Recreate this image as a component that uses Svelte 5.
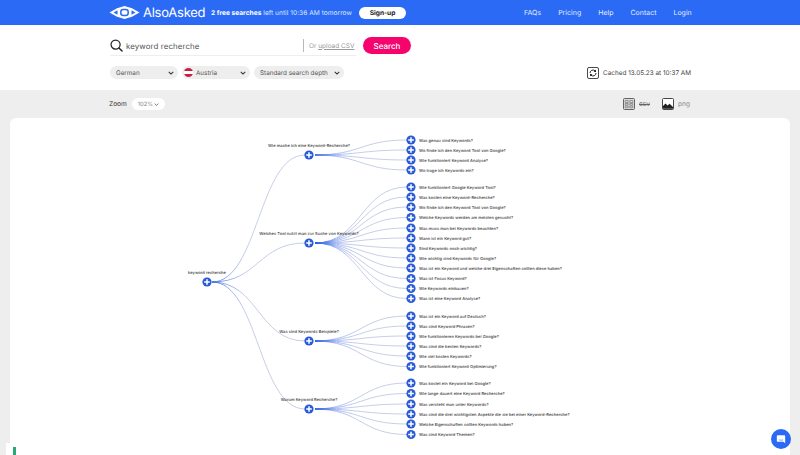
<script>
  const root = { x: 207, y: 282, label: 'keyword recherche' };
  const groups = [
    { y: 155, label: 'Wie mache ich eine Keyword-Recherche?', items: [
      [140, 'Was genau sind Keywords?'],
      [150, 'Wo finde ich den Keyword Tool von Google?'],
      [160, 'Wie funktioniert Keyword Analyse?'],
      [170, 'Wo trage ich Keywords ein?']
    ]},
    { y: 243, label: 'Welches Tool nutzt man zur Suche von Keywords?', items: [
      [187, 'Wie funktioniert Google Keyword Tool?'],
      [197, 'Was kosten eine Keyword-Recherche?'],
      [207, 'Wo finde ich den Keyword Tool von Google?'],
      [217.5, 'Welche Keywords werden am meisten gesucht?'],
      [228, 'Was muss man bei Keywords beachten?'],
      [238, 'Wann ist ein Keyword gut?'],
      [248, 'Sind Keywords noch wichtig?'],
      [258, 'Wie wichtig sind Keywords für Google?'],
      [268, 'Was ist ein Keyword und welche drei Eigenschaften sollten diese haben?'],
      [278.5, 'Was ist Focus Keyword?'],
      [288.5, 'Wie Keywords einbauen?'],
      [298.5, 'Was ist eine Keyword Analyse?']
    ]},
    { y: 341, label: 'Was sind Keywords Beispiele?', items: [
      [316, 'Was ist ein Keyword auf Deutsch?'],
      [326, 'Was sind Keyword Phrasen?'],
      [336, 'Wie funktionieren Keywords bei Google?'],
      [346, 'Was sind die besten Keywords?'],
      [356, 'Wie viel kosten Keywords?'],
      [366.5, 'Wie funktioniert Keyword Optimierung?']
    ]},
    { y: 409, label: 'Warum Keyword Recherche?', items: [
      [383, 'Was kostet ein Keyword bei Google?'],
      [393.5, 'Wie lange dauert eine Keyword Recherche?'],
      [404, 'Was versteht man unter Keywords?'],
      [414, 'Was sind die drei wichtigsten Aspekte die sie bei einer Keyword-Recherche?'],
      [424, 'Welche Eigenschaften sollten Keywords haben?'],
      [434.5, 'Was sind Keyword Themen?']
    ]}
  ];
  const midX = 309;
  const leafX = 411;
  const link = (x0, y0, x1, y1) => {
    const m = (x0 + x1) / 2;
    return `M${x0} ${y0}C${m} ${y0} ${m} ${y1} ${x1} ${y1}`;
  };
  const nav = ['FAQs', 'Pricing', 'Help', 'Contact', 'Login'];
  const chips = [
    { label: 'German', cls: 'lang' },
    { label: 'Austria', cls: 'country', flag: true },
    { label: 'Standard search depth', cls: 'depth' }
  ];
</script>

<div class="page">
  <header class="topbar">
    <div class="brand">
      <svg class="logo" viewBox="0 0 31 13" aria-hidden="true">
        <path d="M.5 6.5 8 2.2 15.5 0 23 2.2 30.5 6.5 23 10.8 15.5 13 8 10.8Z" fill="#fff" />
        <path d="M4.5 6.5 8.5 4.2V8.8Z M26.5 6.5 22.5 4.2V8.8Z" fill="#2a6af5" />
        <rect x="11.8" y="3.6" width="7.4" height="5.8" rx="2.4" fill="none" stroke="#2a6af5" stroke-width="1.5" />
      </svg>
      <span class="wordmark">AlsoAsked</span>
    </div>
    <p class="quota"><b>2 free searches</b> left until 10:36 AM tomorrow</p>
    <span class="signup">Sign-up</span>
    <nav class="nav">
      {#each nav as item}<span>{item}</span>{/each}
    </nav>
  </header>

  <section class="searchpanel">
    <div class="searchrow">
      <svg class="glass" viewBox="0 0 14 14" aria-hidden="true">
        <circle cx="6" cy="6" r="4.9" fill="none" stroke="#222" stroke-width="1.3" />
        <path d="M9.6 9.6 13 13" stroke="#222" stroke-width="1.5" stroke-linecap="round" />
      </svg>
      <span class="query">keyword recherche</span>
      <span class="divider"></span>
      <span class="upload">Or <u>upload CSV</u></span>
      <span class="searchbtn">Search</span>
    </div>
    <div class="filterrow">
      <div class="chips">
        {#each chips as chip}
          <div class="chip {chip.cls}">
            {#if chip.flag}
              <span class="flag"></span>
            {/if}
            <span class="chiplabel">{chip.label}</span>
            <svg class="chev" viewBox="0 0 8 5" aria-hidden="true"><path d="M1 1 4 4 7 1" fill="none" stroke="#333" stroke-width="1.4" /></svg>
          </div>
        {/each}
      </div>
      <div class="cached">
        <svg class="refresh" viewBox="0 0 12 12" aria-hidden="true">
          <rect x=".5" y=".5" width="11" height="11" rx="1.5" fill="#fff" stroke="#333" stroke-width=".9" />
          <path d="M3 6a3 3 0 0 1 5-2.2M9 6a3 3 0 0 1-5 2.2" fill="none" stroke="#222" stroke-width="1" />
          <path d="M9 2.4V5H6.6ZM3 9.6V7H5.4Z" fill="#222" />
        </svg>
        <span>Cached 13.05.23 at 10:37 AM</span>
      </div>
    </div>
  </section>

  <main class="workspace">
    <div class="toolbar">
      <div class="zoom">
        <span class="zoomlabel">Zoom</span>
        <span class="zoompill">102%
          <svg class="chev small" viewBox="0 0 8 5" aria-hidden="true"><path d="M1 1 4 4 7 1" fill="none" stroke="#444" stroke-width="1.2" /></svg>
        </span>
      </div>
      <div class="exports">
        <svg class="exporticon" viewBox="0 0 12 12" aria-hidden="true">
          <rect x=".5" y=".5" width="11" height="11" rx="1" fill="#ddd" stroke="#555" stroke-width=".9" />
          <path d="M2.2 2.5h3v2h-3ZM6.8 2.5h3v2h-3ZM2.2 5.5h3v1.6h-3ZM6.8 5.5h3v1.6h-3ZM2.2 8h3v1.8h-3ZM6.8 8h3v1.8h-3Z" fill="none" stroke="#666" stroke-width=".6" />
        </svg>
        <span class="csv">csv</span>
        <svg class="exporticon png" viewBox="0 0 12 12" aria-hidden="true">
          <rect x=".5" y=".5" width="11" height="11" rx="1" fill="#fff" stroke="#333" stroke-width=".9" />
          <path d="M1 10.8V8l2.5-2.6L5.6 7.6 7.6 5.8 11 9v1.8Z" fill="#222" />
        </svg>
        <span class="pngtext">png</span>
      </div>
    </div>

    <div class="canvas">
      <svg class="tree" viewBox="0 0 780 337" aria-label="Question tree">
        <defs>
          <linearGradient id="fadeRoot" gradientUnits="userSpaceOnUse" x1="213" y1="0" x2="245" y2="0">
            <stop offset="0" stop-color="#2a5fe0" />
            <stop offset="1" stop-color="#aeb9dc" />
          </linearGradient>
          <linearGradient id="fadeMid" gradientUnits="userSpaceOnUse" x1="316" y1="0" x2="356" y2="0">
            <stop offset="0" stop-color="#2a5fe0" />
            <stop offset=".5" stop-color="#85a0f0" />
            <stop offset="1" stop-color="#aeb9dc" />
          </linearGradient>
        </defs>
        <g transform="translate(-10 -118)">
          {#each groups as g}
            <path class="link" stroke="url(#fadeRoot)" d={link(root.x + 5, root.y, midX - 4, g.y)} />
            {#each g.items as it}
              <path class="link" stroke="url(#fadeMid)" d={link(midX + 6, g.y, leafX - 4, it[0])} />
            {/each}
          {/each}

          <text class="label" x={root.x} y={root.y - 8.5} text-anchor="middle">{root.label}</text>
          <g transform="translate({root.x} {root.y})">
            <circle class="node" r="4.6" /><path class="plus" d="M-2.8 0H2.8M0-2.8V2.8" />
          </g>

          {#each groups as g}
            <text class="label" x={midX} y={g.y - 8.5} text-anchor="middle">{g.label}</text>
            <g transform="translate({midX} {g.y})">
              <circle class="node" r="4.6" /><path class="plus" d="M-2.8 0H2.8M0-2.8V2.8" />
            </g>
            {#each g.items as it}
              <g transform="translate({leafX} {it[0]})">
                <circle class="node" r="4.6" /><path class="plus" d="M-2.8 0H2.8M0-2.8V2.8" />
              </g>
              <text class="label" x={leafX + 8} y={it[0] + 1.5}>{it[1]}</text>
            {/each}
          {/each}
        </g>
      </svg>
      <span class="badge"><i></i></span>
    </div>
  </main>

  <button class="chat" aria-label="Chat">
    <svg viewBox="0 0 12 12" aria-hidden="true">
      <path d="M2 1.5h8a1 1 0 0 1 1 1v8.5L8.8 9.4H2a1 1 0 0 1-1-1v-6a1 1 0 0 1 1-.9Z" fill="#fff" />
      <path d="M3.4 6.8c1.5.9 3.7.9 5.2 0" fill="none" stroke="#2a6af5" stroke-width=".7" />
    </svg>
  </button>
</div>

<style>
  :global(body) { margin: 0; overflow: hidden; background: #eee; }
  .page {
    position: relative;
    width: 800px;
    height: 455px;
    overflow: hidden;
    display: flex;
    flex-direction: column;
    font-family: Inter, "Open Sans", "Liberation Sans", sans-serif;
    text-rendering: geometricPrecision;
    color: #444;
  }
  p { margin: 0; }

  .topbar {
    height: 25px;
    flex: none;
    background: #2a6af5;
    color: #fff;
    display: flex;
    align-items: center;
    padding-left: 109px;
    box-sizing: border-box;
  }
  .brand { display: flex; align-items: center; gap: 3px; width: 102px; }
  .logo { width: 31px; height: 13px; flex: none; }
  .wordmark { font-size: 13px; font-weight: 400; letter-spacing: -.25px; }
  .quota { font-size: 6.6px; width: 148px; color: #dfe8ff; white-space: nowrap; letter-spacing: .03px; }
  .quota b { font-weight: 700; color: #fff; }
  .signup {
    width: 47px;
    height: 12px;
    border-radius: 6px;
    background: #fff;
    color: #222;
    font-size: 6.6px;
    font-weight: 700;
    display: flex;
    align-items: center;
    justify-content: center;
  }
  .nav { display: flex; gap: 17px; margin-left: 118px; font-size: 7px; color: #e3ebff; }

  .searchpanel {
    height: 65px;
    flex: none;
    background: #fff;
    box-sizing: border-box;
    padding: 11px 109px 0 110px;
    display: flex;
    flex-direction: column;
  }
  .searchrow {
    height: 19px;
    width: 301px;
    display: flex;
    align-items: center;
    position: relative;
  }
  .searchrow::after {
    content: "";
    position: absolute;
    left: 0;
    top: 19px;
    width: 246px;
    height: 1px;
    background: #eee;
  }
  .glass { width: 13px; height: 13px; flex: none; }
  .query { font-size: 7.9px; color: #555; margin-left: 3px; width: 177px; letter-spacing: .1px; white-space: nowrap; flex: none; }
  .divider { width: 1px; height: 13px; background: #b8b8b8; flex: none; }
  .upload { font-size: 6.5px; color: #999; margin-left: 5px; width: 54px; white-space: nowrap; flex: none; }
  .searchbtn {
    width: 48px;
    height: 17px;
    flex: none;
    border-radius: 9px;
    background: #f5046e;
    color: #fff;
    font-size: 8px;
    font-weight: 500;
    display: flex;
    align-items: center;
    justify-content: center;
  }
  .filterrow {
    display: flex;
    justify-content: space-between;
    align-items: center;
    margin-top: 11px;
    height: 13px;
  }
  .chips { display: flex; gap: 4px; }
  .chip {
    height: 13px;
    box-sizing: border-box;
    background: #eee;
    border-radius: 6.5px;
    display: flex;
    align-items: center;
    font-size: 6.3px;
    color: #555;
    padding: 0 4px 0 6px;
  }
  .chiplabel { flex: 1; white-space: nowrap; }
  .lang { width: 68px; }
  .country { width: 68px; padding-left: 2px; }
  .depth { width: 90px; padding-left: 6px; }
  .flag {
    width: 9px;
    height: 9px;
    border-radius: 50%;
    margin-right: 3px;
    flex: none;
    background: linear-gradient(#c8213f 33%, #fff 33%, #fff 66%, #c8213f 66%);
  }
  .chev { width: 6px; height: 4px; flex: none; }
  .chev.small { width: 5px; height: 3px; margin-left: 1px; }
  .cached { display: flex; align-items: center; gap: 4px; font-size: 6.4px; color: #444; white-space: nowrap; }
  .refresh { width: 12px; height: 12px; flex: none; }

  .workspace { flex: 1; min-height: 0; background: #eee; display: flex; flex-direction: column; }
  .toolbar {
    height: 28px;
    flex: none;
    box-sizing: border-box;
    padding: 0 109px;
    display: flex;
    justify-content: space-between;
    align-items: center;
  }
  .zoom { display: flex; align-items: center; gap: 5px; }
  .zoomlabel { font-size: 6.6px; color: #333; }
  .zoompill {
    width: 33px;
    height: 12px;
    border-radius: 6px;
    background: #fff;
    font-size: 5.8px;
    color: #888;
    display: flex;
    align-items: center;
    justify-content: center;
  }
  .exports { display: flex; align-items: center; font-size: 6.6px; color: #888; }
  .exporticon { width: 12px; height: 12px; flex: none; }
  .exporticon.png { margin-left: 12px; }
  .exports span { margin-left: 4px; }
  .csv { text-decoration: line-through; color: #666; }
  .pngtext { width: 13px; }

  .canvas {
    flex: 1;
    min-height: 0;
    margin: 0 10px;
    background: #fff;
    border-radius: 6px 6px 0 0;
    position: relative;
  }
  .tree { display: block; width: 780px; height: 337px; }
  .link { fill: none; stroke-width: .7; }
  .node { fill: #2a5bd7; }
  .plus { stroke: #fff; stroke-width: 1.5; fill: none; }
  .label { font-size: 4.05px; font-weight: 500; fill: #3a3a3a; letter-spacing: .04px; }

  .badge {
    position: absolute;
    left: -4px;
    bottom: 0;
    width: 15px;
    height: 12px;
    background: #fff;
  }
  .badge i {
    position: absolute;
    left: 7px;
    bottom: 0;
    width: 2.5px;
    height: 8px;
    background: #2aa876;
  }
  .chat {
    position: absolute;
    left: 771px;
    top: 429px;
    width: 20px;
    height: 20px;
    border: 0;
    padding: 0;
    border-radius: 50%;
    background: #2a6af5;
    display: flex;
    align-items: center;
    justify-content: center;
  }
  .chat svg { width: 10px; height: 10px; }
</style>
